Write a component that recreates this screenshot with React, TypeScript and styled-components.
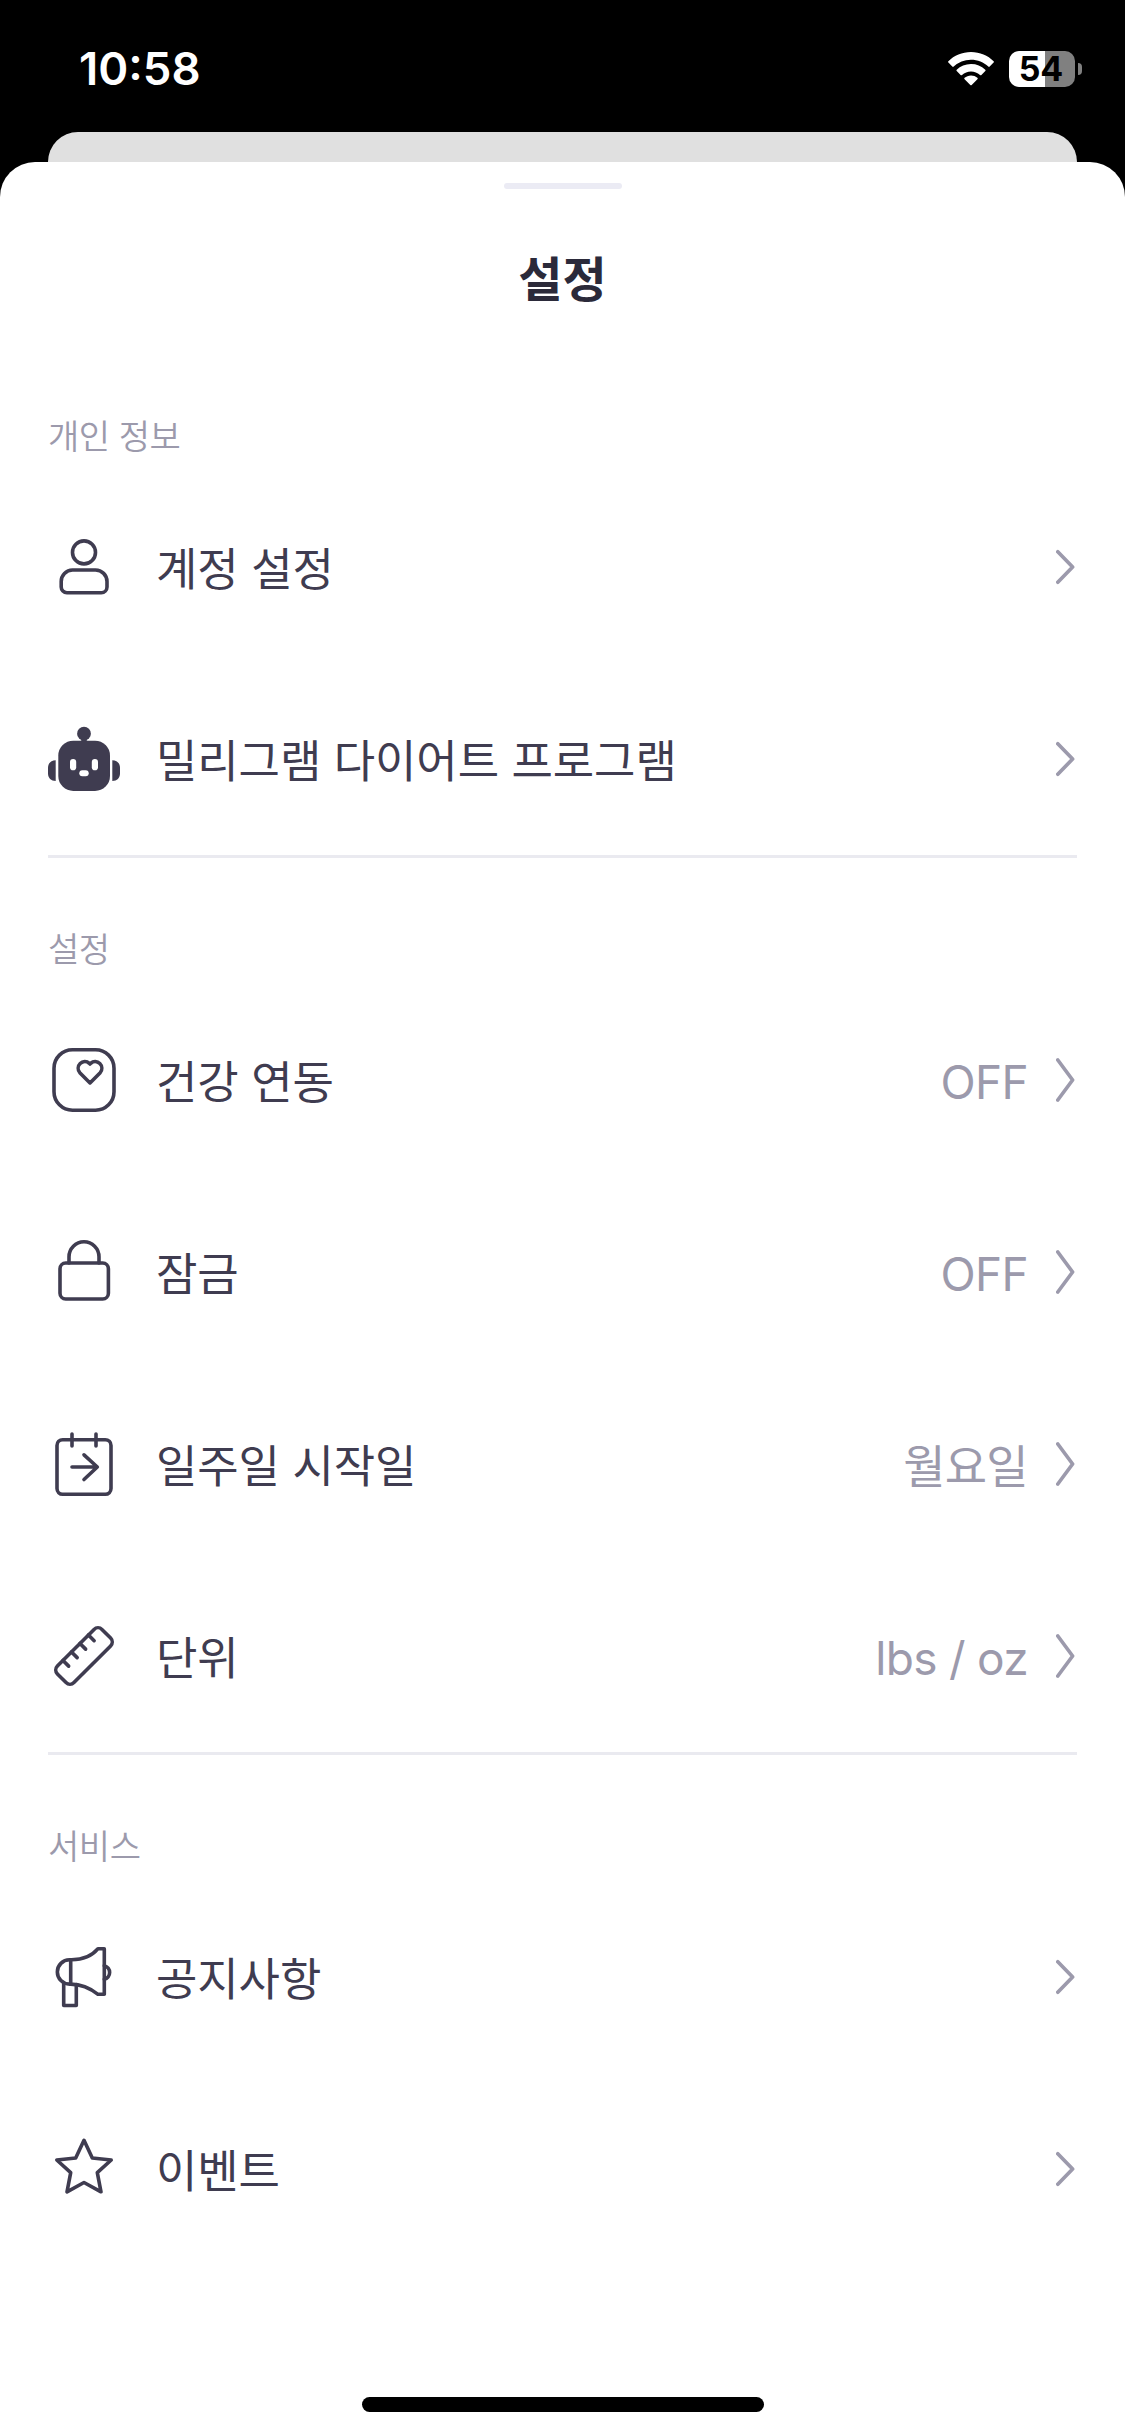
import React from "react";
import styled, { createGlobalStyle } from "styled-components";

const INK = "#3f3c50";
const MUTED = "#9c9aac";
const LINE = "#eaeaf0";

const GlobalStyle = createGlobalStyle`
  * { box-sizing: border-box; }
  body {
    margin: 0;
    background: #000;
    font-family: Inter, "Noto Sans CJK KR", sans-serif;
  }
`;

const Screen = styled.div`
  width: 1125px;
  height: 2436px;
  display: flex;
  flex-direction: column;
  background: #000;
  overflow: hidden;
`;

const StatusBar = styled.header`
  height: 132px;
  flex: none;
  display: flex;
  align-items: flex-start;
  justify-content: space-between;
  padding: 42px 43px 0 79px;
`;

const Clock = styled.time`
  font-size: 45.5px;
  line-height: 54px;
  font-weight: 600;
  color: #fff;
`;

const StatusIcons = styled.div`
  display: flex;
  align-items: center;
  height: 54px;
  gap: 15px;
`;

const BatteryWrap = styled.div`
  display: flex;
  align-items: center;
  gap: 3px;
`;

const Battery = styled.div<{ $level: number }>`
  width: 66px;
  height: 36px;
  border-radius: 10px;
  display: flex;
  align-items: center;
  justify-content: center;
  background: linear-gradient(to right, #fff ${(p) => p.$level}%, #808080 ${(p) => p.$level}%);
  color: #000;
  font-size: 34px;
  line-height: 36px;
  font-weight: 650;
  padding-right: 2px;
`;

const BatteryNub = styled.div`
  width: 4px;
  height: 12px;
  border-radius: 0 6px 6px 0;
  background: #808080;
`;

const BackCard = styled.div`
  height: 30px;
  flex: none;
  margin: 0 48px;
  border-radius: 30px 30px 0 0;
  background: #e0e0e0;
`;

const Sheet = styled.main`
  flex: 1;
  display: flex;
  flex-direction: column;
  background: #fff;
  border-radius: 35px 35px 0 0;
  padding: 21px 48px 24px;
`;

const Handle = styled.div`
  width: 118px;
  height: 6px;
  flex: none;
  align-self: center;
  border-radius: 3px;
  background: #ebebf4;
`;

const Title = styled.h1`
  margin: 55px 0 29px;
  height: 72px;
  font-size: 48px;
  line-height: 72px;
  font-weight: 700;
  text-align: center;
  color: #2b2a3a;
`;

const Section = styled.section`
  & + & {
    border-top: 3px solid ${LINE};
  }
`;

const SectionLabel = styled.h2`
  margin: 0;
  padding-top: 66px;
  height: 126px;
  font-size: 34px;
  line-height: 52px;
  font-weight: 350;
  letter-spacing: -0.45px;
  color: ${MUTED};
`;

const Row = styled.div`
  height: 192px;
  display: flex;
  align-items: center;
`;

const IconBox = styled.svg`
  width: 72px;
  height: 72px;
  flex: none;
  fill: none;
  stroke: ${INK};
  stroke-width: 3.6;
  stroke-linecap: round;
  stroke-linejoin: round;
`;

const RowLabel = styled.span`
  flex: 1;
  margin-left: 36px;
  padding-top: 6px;
  font-size: 45px;
  line-height: 66px;
  letter-spacing: -0.1px;
  color: ${INK};
`;

const RowValue = styled.span`
  margin-right: 28px;
  padding-top: 3px;
  font-size: 46px;
  line-height: 66px;
  letter-spacing: -0.7px;
  color: ${MUTED};
`;

const ChevronSvg = styled.svg`
  flex: none;
  fill: none;
  stroke: ${MUTED};
  stroke-width: 3.7;
  stroke-linecap: round;
  stroke-linejoin: round;
`;

const HomeIndicator = styled.div`
  width: 402px;
  height: 15px;
  flex: none;
  margin-top: auto;
  align-self: center;
  border-radius: 8px;
  background: #000;
`;

const Chevron = ({ tall }: { tall?: boolean }) => {
  const reach = tall ? 20 : 15.2;
  return (
    <ChevronSvg width={21} height={48} viewBox="0 0 21 48">
      <path d={`M1.8 ${24 - reach} L16.6 24 L1.8 ${24 + reach}`} />
    </ChevronSvg>
  );
};

const WifiIcon = () => (
  <svg width="46" height="34" viewBox="0 0 46 34" fill="#fff">
    <path d="M23 0C14.1 0 6.100 3.500.4 9.200a1 1 0 0 0 0 1.400l3.900 4a1 1 0 0 0 1.400 0A24.800 24.800 0 0 1 23 7.700c6.700 0 12.800 2.600 17.300 6.900a1 1 0 0 0 1.400 0l3.900-4a1 1 0 0 0 0-1.400C39.900 3.500 31.900 0 23 0z" />
    <path d="M23 12c-5.600 0-10.600 2.200-14.300 5.700a1 1 0 0 0 0 1.400l3.900 3.900a1 1 0 0 0 1.400 0 13.200 13.200 0 0 1 18 0 1 1 0 0 0 1.400 0l3.900-3.900a1 1 0 0 0 0-1.400A20.700 20.700 0 0 0 23 12z" />
    <path d="M23 23.400c-2.500 0-4.700.9-6.400 2.400a1 1 0 0 0 0 1.500l5.700 5.700a1 1 0 0 0 1.400 0l5.700-5.700a1 1 0 0 0 0-1.500 9.600 9.600 0 0 0-6.400-2.400z" />
  </svg>
);

const icons: Record<string, React.ReactNode> = {
  person: (
    <>
      <circle cx="36" cy="21.400" r="11.500" />
      <path d="M24.500 39h23a11.500 11.500 0 0 1 11.500 11.500V56a5.700 5.700 0 0 1-5.700 5.700H18.900a5.700 5.700 0 0 1-5.700-5.700v-5.500A11.400 11.400 0 0 1 24.500 39z" />
    </>
  ),
  robot: (
    <g stroke="none" fill={INK}>
      <circle cx="36" cy="10.700" r="6.900" />
      <path d="M33.500 15h5v2.200l1.500 1.300h-8l1.500-1.300z" />
      <rect x="10.300" y="17.700" width="51.700" height="50.300" rx="15" />
      <path d="M7.700 37.300v20.700C3 58 0 55 0 50.500v-5.700C0 40.300 3 37.300 7.700 37.300z" />
      <path d="M64.300 37.300v20.700c4.700 0 7.700-3 7.700-7.500v-5.700c0-4.500-3-7.500-7.700-7.500z" />
      <g fill="#fff">
        <rect x="22" y="36" width="6.200" height="11.300" rx="3.100" />
        <rect x="43.800" y="36" width="6.200" height="11.300" rx="3.100" />
        <rect x="31.300" y="47.300" width="9.400" height="6" rx="3" />
      </g>
    </g>
  ),
  health: (
    <>
      <rect x="6" y="5.700" width="60" height="60.500" rx="18.500" />
      <path d="M42 38.900L31.800 28.700A6.700 6.700 0 0 1 41.300 19.300L42 20L42.700 19.300A6.700 6.700 0 0 1 52.200 28.700Z" />
    </>
  ),
  lock: (
    <>
      <rect x="12" y="27" width="48.400" height="36" rx="5.700" />
      <path d="M21 27v-6.200a15 15 0 0 1 30 0V27" />
    </>
  ),
  calendar: (
    <>
      <rect x="9" y="11.700" width="54" height="54.600" rx="5.700" />
      <path d="M24 6v12M48 6v12M24 39h25.300M36 26.800L49.300 39L36 51.500" />
    </>
  ),
  ruler: (
    <g transform="translate(36 36) rotate(-45)">
      <rect x="-31.500" y="-11.700" width="63" height="23.400" rx="5.600" />
      <path d="M-18-11.700v8M-6-11.700v8M6-11.700v8M18-11.700v8" />
    </g>
  ),
  megaphone: (
    <>
      <path d="M22.700 18.800C34 19 43.500 15.500 50 7.700H56.300V53.300H50C42 47 33.500 43.300 22.700 43.100Z" />
      <path d="M22.700 18.800H21.500A12.150 12.150 0 0 0 21.500 43.100H22.700" />
      <path d="M15.700 42.500V64.500H28.300V43.500" />
      <path d="M56.300 24.700A7 7 0 0 1 56.300 38.300" />
    </>
  ),
  star: (
    <path d="M36 7.300L44.300 25L63.200 27L49.300 39.700L53 58.800L36 49.500L19 58.800L22.700 39.700L8.800 27L27.700 25Z" />
  ),
};

interface Item {
  icon: string;
  label: string;
  value?: string;
}

const sections: { title: string; items: Item[] }[] = [
  {
    title: "개인 정보",
    items: [
      { icon: "person", label: "계정 설정" },
      { icon: "robot", label: "밀리그램 다이어트 프로그램" },
    ],
  },
  {
    title: "설정",
    items: [
      { icon: "health", label: "건강 연동", value: "OFF" },
      { icon: "lock", label: "잠금", value: "OFF" },
      { icon: "calendar", label: "일주일 시작일", value: "월요일" },
      { icon: "ruler", label: "단위", value: "lbs / oz" },
    ],
  },
  {
    title: "서비스",
    items: [
      { icon: "megaphone", label: "공지사항" },
      { icon: "star", label: "이벤트" },
    ],
  },
];

export default function App() {
  return (
    <>
      <GlobalStyle />
      <Screen lang="ko">
        <StatusBar>
          <Clock>10:58</Clock>
          <StatusIcons>
            <WifiIcon />
            <BatteryWrap>
              <Battery $level={54}>54</Battery>
              <BatteryNub />
            </BatteryWrap>
          </StatusIcons>
        </StatusBar>
        <BackCard />
        <Sheet>
          <Handle />
          <Title>설정</Title>
          {sections.map((section) => (
            <Section key={section.title}>
              <SectionLabel>{section.title}</SectionLabel>
              {section.items.map((item) => (
                <Row key={item.label}>
                  <IconBox viewBox="0 0 72 72">{icons[item.icon]}</IconBox>
                  <RowLabel>{item.label}</RowLabel>
                  {item.value && <RowValue>{item.value}</RowValue>}
                  <Chevron tall={Boolean(item.value)} />
                </Row>
              ))}
            </Section>
          ))}
          <HomeIndicator />
        </Sheet>
      </Screen>
    </>
  );
}
